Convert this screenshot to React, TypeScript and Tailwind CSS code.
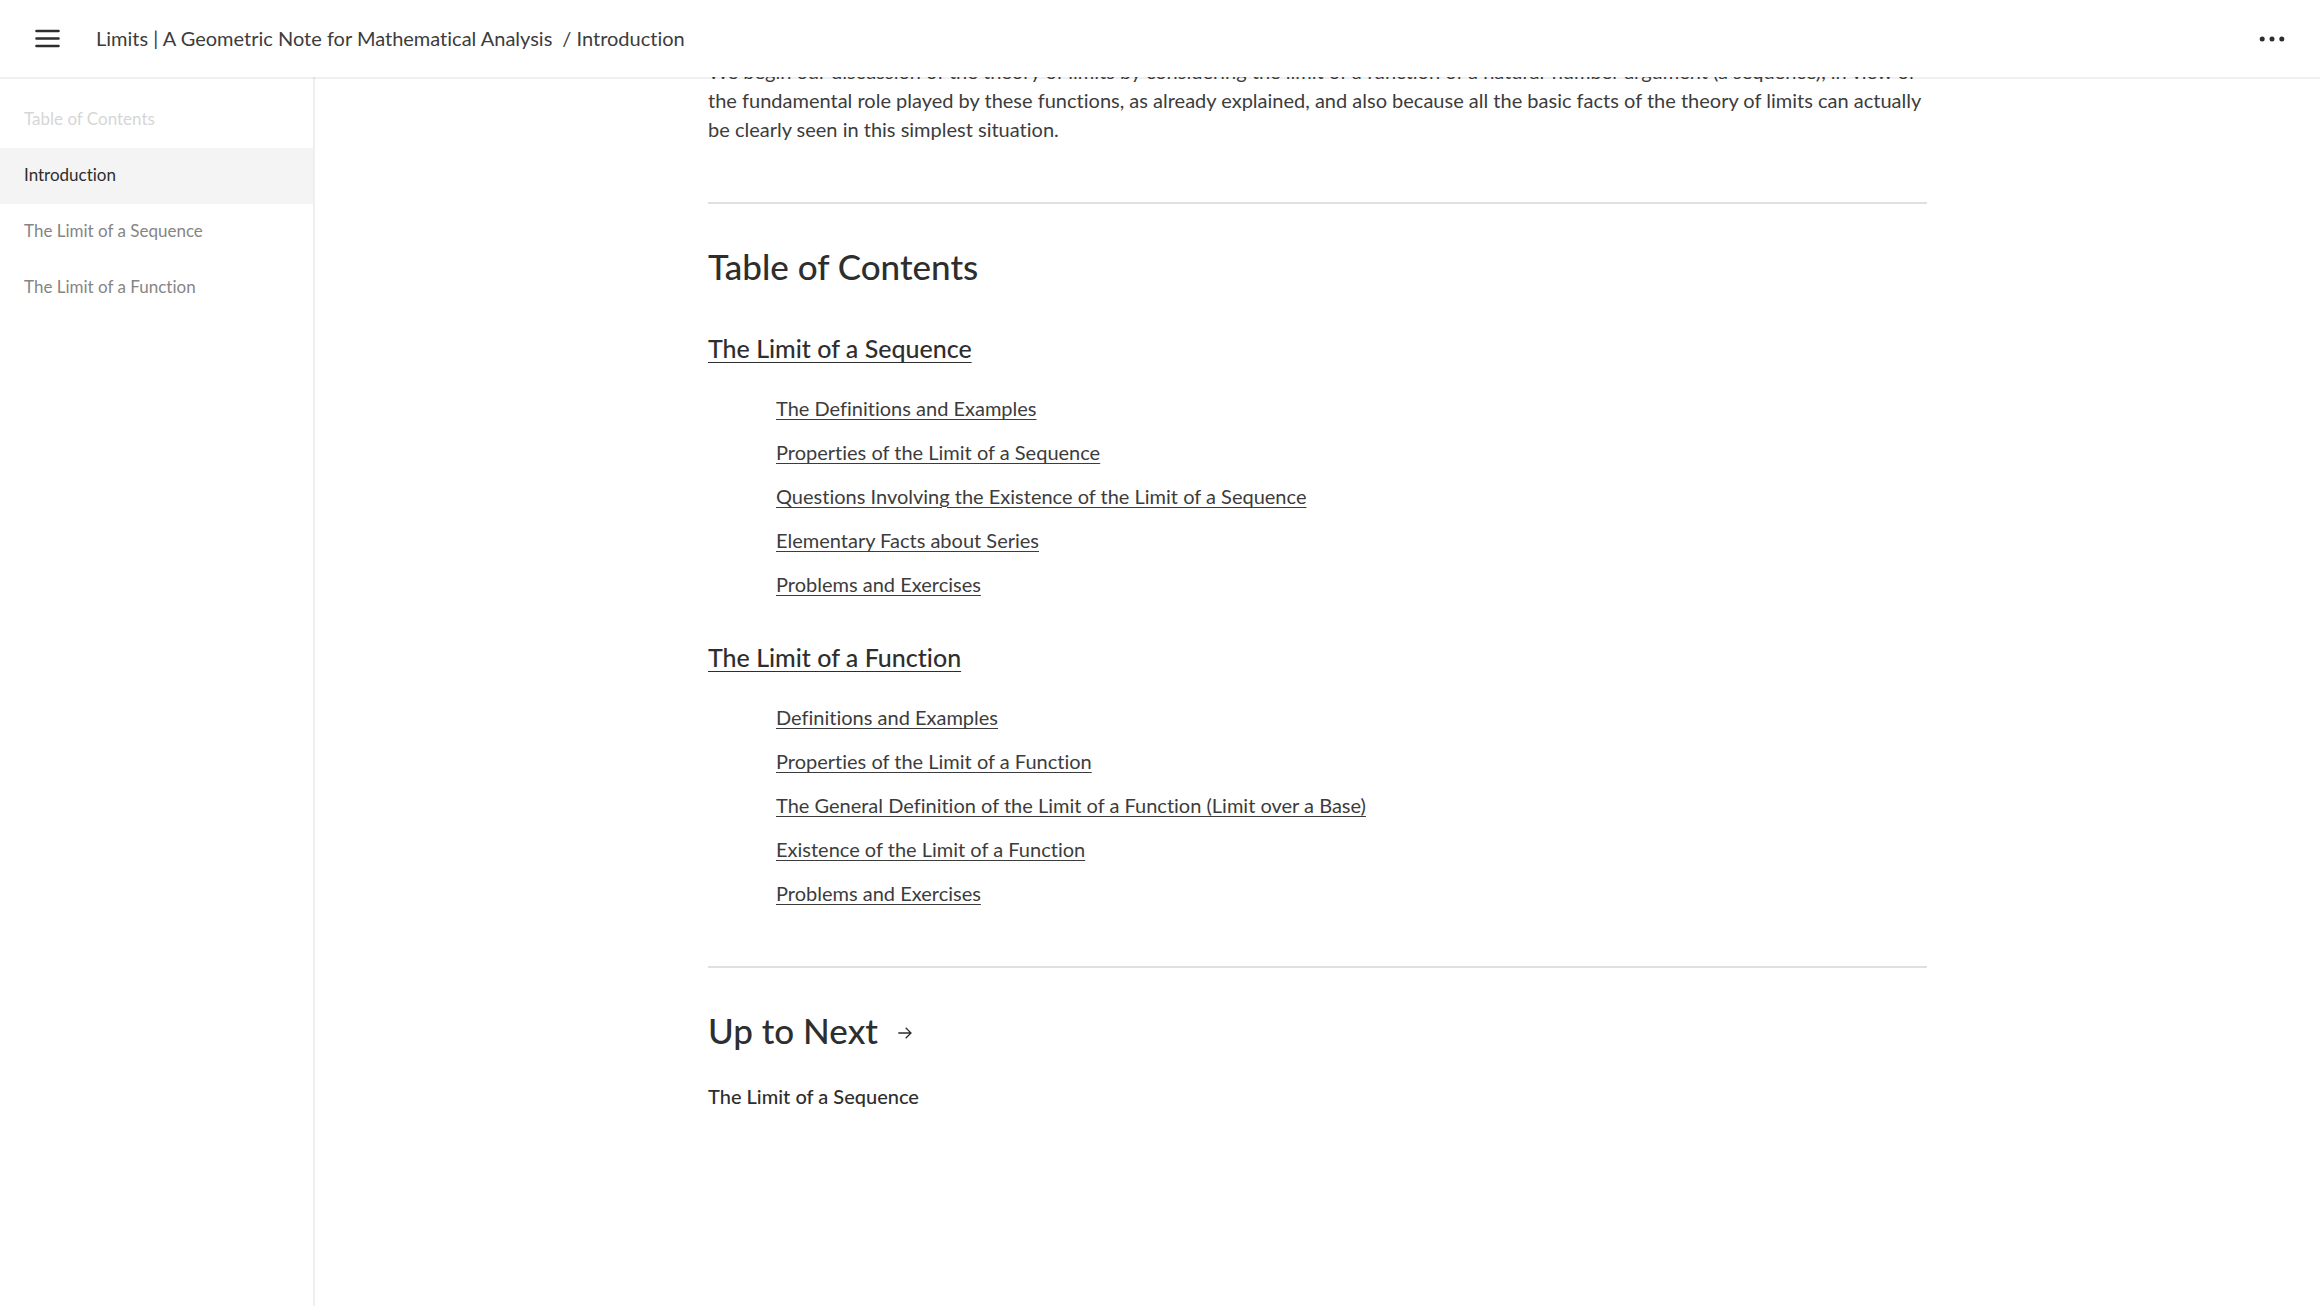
const sidebarItems = [
  { label: "Introduction", active: true },
  { label: "The Limit of a Sequence", active: false },
  { label: "The Limit of a Function", active: false },
];

const chapters = [
  {
    title: "The Limit of a Sequence",
    sections: [
      "The Definitions and Examples",
      "Properties of the Limit of a Sequence",
      "Questions Involving the Existence of the Limit of a Sequence",
      "Elementary Facts about Series",
      "Problems and Exercises",
    ],
  },
  {
    title: "The Limit of a Function",
    sections: [
      "Definitions and Examples",
      "Properties of the Limit of a Function",
      "The General Definition of the Limit of a Function (Limit over a Base)",
      "Existence of the Limit of a Function",
      "Problems and Exercises",
    ],
  },
];

function MenuIcon() {
  return (
    <svg width="25" height="19" viewBox="0 0 25 19" fill="none" stroke="currentColor" strokeWidth="2.6" strokeLinecap="round" aria-hidden="true">
      <path d="M1.5 2h22M1.5 9.5h22M1.5 17h22" />
    </svg>
  );
}

function MoreIcon() {
  return (
    <svg width="26" height="6" viewBox="0 0 26 6" fill="currentColor" aria-hidden="true">
      <circle cx="3.2" cy="3" r="2.5" />
      <circle cx="13" cy="3" r="2.5" />
      <circle cx="22.8" cy="3" r="2.5" />
    </svg>
  );
}

function ArrowIcon() {
  return (
    <svg width="14" height="17" viewBox="0 0 14 17" fill="none" stroke="currentColor" strokeWidth="1.3" aria-hidden="true">
      <path d="M0.3 11H13M7.7 5.7L13 11L7.7 16.3" />
    </svg>
  );
}

function Header() {
  return (
    <header className="fixed inset-x-0 top-0 z-10 flex h-[79px] items-center justify-between border-b-2 border-black/6 bg-white bg-clip-padding px-[35px] text-[#2e2e2e]">
      <div className="flex items-center gap-9">
        <button type="button" aria-label="Toggle sidebar">
          <MenuIcon />
        </button>
        <nav aria-label="Breadcrumb" className="flex gap-2.5 text-[20px] leading-[29px] text-[#3c3c3c]">
          <a href="#book">Limits | A Geometric Note for Mathematical Analysis</a>
          <span>/ Introduction</span>
        </nav>
      </div>
      <button type="button" aria-label="More options">
        <MoreIcon />
      </button>
    </header>
  );
}

function Sidebar() {
  return (
    <aside className="w-[315px] shrink-0 border-r-2 border-[#efefef] pt-[92px] text-[17px] leading-[25px]">
      <h2 className="px-6 pt-3.5 pb-[17px] text-[#d6d6d6]">Table of Contents</h2>
      <nav aria-label="Table of Contents" className="flex flex-col">
        {sidebarItems.map((item) => (
          <a
            key={item.label}
            href="#page"
            aria-current={item.active ? "page" : undefined}
            className={item.active ? "bg-[#f4f4f4] px-6 pt-3.5 pb-[17px] text-[#2e2e2e]" : "px-6 pt-3.5 pb-[17px] text-[#858585]"}
          >
            {item.label}
          </a>
        ))}
      </nav>
    </aside>
  );
}

export default function App() {
  return (
    <div className="flex min-h-screen bg-white font-['Lato',sans-serif] text-[#3c3c3c] [font-variant-ligatures:none]">
      <Header />
      <Sidebar />
      <main className="min-w-0 grow px-8 pt-[57px] pb-16">
        <article className="mx-auto max-w-[1219px] text-[20px] leading-[29px]">
          <p>
            We begin our discussion of the theory of limits by considering the limit of a function of a natural-number
            argument (a sequence), in view of the fundamental role played by these functions, as already explained, and
            also because all the basic facts of the theory of limits can actually be clearly seen in this simplest
            situation.
          </p>
          <hr className="mt-[58px] mb-[38px] border-t-2 border-[#e0e0e0]" />
          <h1 className="text-[35px] font-medium leading-[48px] text-[#2e2e2e]">Table of Contents</h1>
          {chapters.map((chapter) => (
            <section key={chapter.title} className="mt-10">
              <h2 className="text-[25px] font-medium leading-9 text-[#2e2e2e]">
                <a href="#chapter" className="underline decoration-1 underline-offset-4">
                  {chapter.title}
                </a>
              </h2>
              <ul className="mt-7 flex flex-col gap-[15px] pl-[68px]">
                {chapter.sections.map((section) => (
                  <li key={section}>
                    <a href="#section" className="underline decoration-1 underline-offset-3">
                      {section}
                    </a>
                  </li>
                ))}
              </ul>
            </section>
          ))}
          <hr className="mt-[58px] mb-[38px] border-t-2 border-[#e0e0e0]" />
          <h1 className="flex items-center gap-5 text-[35px] font-medium leading-[48px] text-[#2e2e2e]">
            Up to Next
            <ArrowIcon />
          </h1>
          <p className="mt-7 font-medium text-[#2e2e2e]">
            <a href="#next">The Limit of a Sequence</a>
          </p>
        </article>
      </main>
    </div>
  );
}
